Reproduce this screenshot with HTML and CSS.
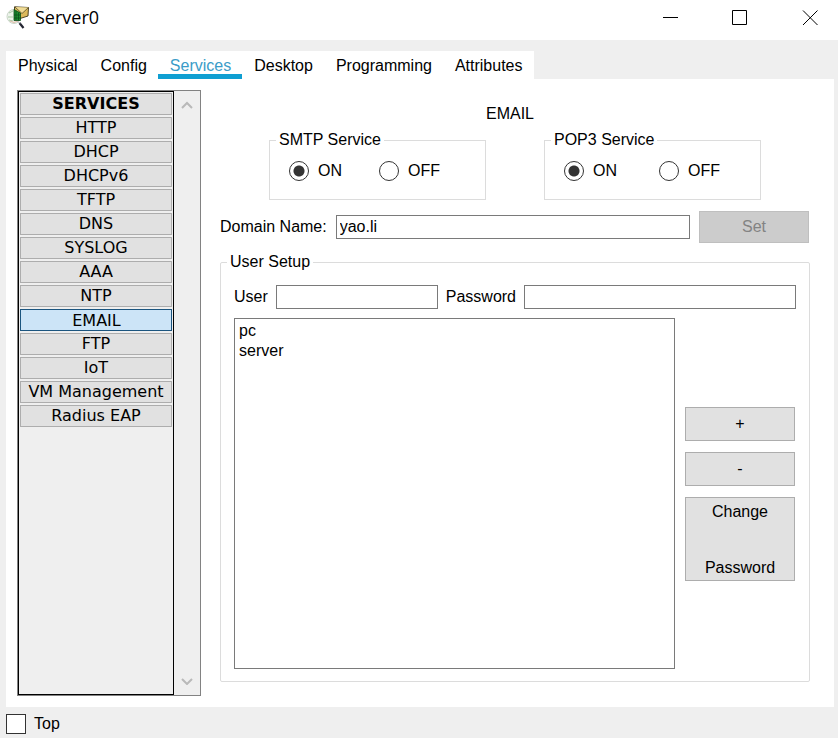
FILE: index.html
```html
<!DOCTYPE html>
<html lang="en">
<head>
<meta charset="utf-8">
<title>Server0</title>
<link rel="stylesheet" href="styles.css">
</head>
<body>
<header class="titlebar">
  <svg class="app-icon" viewBox="0 0 24 24" aria-hidden="true">
    <circle cx="8" cy="10.500" r="7" fill="#eef4ec" stroke="#cbd5c9"/>
    <path d="M3 7l4-2M2 11h5M3 14l4 1" stroke="#a9c9a4" fill="none"/>
    <path d="M4 15q4 3 8 0" stroke="#e2b9a8" fill="none"/>
    <path d="M8.500 .8L22.500 1.500L22 10L14 12.500L8.500 9z" fill="#dcb95c" stroke="#3b3317" stroke-width=".9"/>
    <path d="M9 1L16 7.500L22.500 1.500" fill="#f0dc96" stroke="#5b4d24" stroke-width=".8"/>
    <path d="M8 3.500L14.500 7V14.500L8 14.500z" fill="#1d8a30" stroke="#0a4a17" stroke-width=".8"/>
    <path d="M10 5v9M12.500 6.500v8M8 9h6M8 12h6" stroke="#07521a" stroke-width=".8" fill="none"/>
    <path d="M13.500 17L17.500 22" stroke="#222430" stroke-width="2.2"/>
    <path d="M12 15.500l2 2" stroke="#9a9aa5"/>
  </svg>
  <h1 class="title">Server0</h1>
  <div class="window-buttons">
    <button class="window-button" type="button" aria-label="Minimize"><svg viewBox="0 0 16 16"><path d="M1 7.500H16"/></svg></button>
    <button class="window-button" type="button" aria-label="Maximize"><svg viewBox="0 0 16 16"><path d="M.5 .5H14.500V14.500H.5z"/></svg></button>
    <button class="window-button" type="button" aria-label="Close"><svg viewBox="0 0 16 16"><path d="M1 .5L15.500 15M15.500 .5L1 15"/></svg></button>
  </div>
</header>

<nav class="tabs">
  <a class="tab" href="#physical">Physical</a>
  <a class="tab" href="#config">Config</a>
  <a class="tab tab-active" href="#services">Services</a>
  <a class="tab" href="#desktop">Desktop</a>
  <a class="tab" href="#programming">Programming</a>
  <a class="tab" href="#attributes">Attributes</a>
</nav>

<main class="panel">
  <aside class="sidebar">
    <div class="service-list">
      <button class="service service-heading" type="button">SERVICES</button>
      <button class="service" type="button">HTTP</button>
      <button class="service" type="button">DHCP</button>
      <button class="service" type="button">DHCPv6</button>
      <button class="service" type="button">TFTP</button>
      <button class="service" type="button">DNS</button>
      <button class="service" type="button">SYSLOG</button>
      <button class="service" type="button">AAA</button>
      <button class="service" type="button">NTP</button>
      <button class="service service-active" type="button">EMAIL</button>
      <button class="service" type="button">FTP</button>
      <button class="service" type="button">IoT</button>
      <button class="service" type="button">VM Management</button>
      <button class="service" type="button">Radius EAP</button>
    </div>
    <div class="scrollbar">
      <button class="scroll-button" type="button" aria-label="Scroll up"><svg viewBox="0 0 12 8"><path d="M1 7L6 2L11 7"/></svg></button>
      <button class="scroll-button" type="button" aria-label="Scroll down"><svg viewBox="0 0 12 8"><path d="M1 2L6 7L11 2"/></svg></button>
    </div>
  </aside>

  <form class="settings">
    <h2 class="heading">EMAIL</h2>
    <div class="protocols">
      <fieldset class="group">
        <legend>SMTP Service</legend>
        <div class="choices">
          <label class="choice"><input class="radio" type="radio" name="smtp" checked>ON</label>
          <label class="choice"><input class="radio" type="radio" name="smtp">OFF</label>
        </div>
      </fieldset>
      <fieldset class="group">
        <legend>POP3 Service</legend>
        <div class="choices choices-wide">
          <label class="choice"><input class="radio" type="radio" name="pop3" checked>ON</label>
          <label class="choice"><input class="radio" type="radio" name="pop3">OFF</label>
        </div>
      </fieldset>
    </div>

    <div class="domain">
      <label for="domain">Domain Name:</label>
      <input class="field" id="domain" type="text" value="yao.li">
      <button class="button" type="button" disabled>Set</button>
    </div>

    <fieldset class="group user-setup">
      <legend>User Setup</legend>
      <div class="setup-body">
        <div class="credentials">
          <label for="user">User</label>
          <input class="field field-user" id="user" type="text">
          <label for="password">Password</label>
          <input class="field field-password" id="password" type="password">
        </div>
        <div class="accounts">
          <select class="account-list" size="2" aria-label="Users">
            <option>pc</option>
            <option>server</option>
          </select>
          <div class="actions">
            <button class="button" type="button">+</button>
            <button class="button" type="button">-</button>
            <button class="button button-tall" type="button"><span>Change</span> <span>Password</span></button>
          </div>
        </div>
      </div>
    </fieldset>
  </form>
</main>

<footer class="footer">
  <label class="top-choice"><input class="checkbox" type="checkbox">Top</label>
</footer>
</body>
</html>
```
FILE: styles.css
```css
* {
  box-sizing: border-box;
}

body {
  margin: 0;
  min-height: 100vh;
  display: flex;
  flex-direction: column;
  background: #efefef;
  color: #000;
  font: 16px/20px "Liberation Sans", Arial, sans-serif;
}

button,
input,
select {
  margin: 0;
  font: inherit;
  color: inherit;
}

.titlebar {
  display: flex;
  align-items: center;
  height: 40px;
  padding-left: 6px;
  background: #fff;
}

.app-icon {
  width: 24px;
  height: 24px;
  margin-bottom: 4px;
}

.title {
  flex: 1;
  margin: 0 0 6px 5px;
  font: 18px/24px "Open Sans", sans-serif;
}

.window-buttons {
  display: flex;
  gap: 14px;
  margin-bottom: 5px;
}

.window-button {
  width: 56px;
  height: 35px;
  padding: 0;
  border: 0;
  background: none;
}

.window-button svg {
  display: block;
  width: 16px;
  height: 16px;
  margin: auto;
  fill: none;
  stroke: #000;
}

.tabs {
  display: flex;
  align-self: flex-start;
  margin: 11px 0 0 6px;
  background: #fff;
}

.tab {
  height: 28px;
  padding: 5px 11px 0 12px;
  color: #000;
  text-decoration: none;
}

.tab-active {
  color: #3a9cc8;
  border-bottom: 5px solid #0f9fd2;
}

.panel {
  flex: 1;
  display: flex;
  gap: 19px;
  margin: 0 4px 0 6px;
  padding: 11px 24px 11px 11px;
  background: #fff;
}

.sidebar {
  flex: none;
  display: flex;
  width: 184px;
  border: 1px solid #828282;
  background: #efefef;
}

.service-list {
  flex: 1;
  display: flex;
  flex-direction: column;
  gap: 2px;
  padding: 1px;
  border: 1px solid #000;
}

.service {
  height: 22px;
  padding: 0;
  border: 1px solid #adadad;
  background: #e1e1e1;
  font: 16px/20px "DejaVu Sans", Verdana, sans-serif;
  white-space: nowrap;
}

.service-heading {
  font-weight: bold;
}

.service-active {
  padding: 1px 0 0 1px;
  border-color: #1b557f;
  background: #cce4f7;
}

.scrollbar {
  width: 26px;
  display: flex;
  flex-direction: column;
  justify-content: space-between;
}

.scroll-button {
  height: 28px;
  padding: 0;
  border: 0;
  background: none;
}

.scroll-button svg {
  display: block;
  width: 12px;
  height: 8px;
  margin: auto;
  fill: none;
  stroke: #b9b9b9;
  stroke-width: 2;
}

.settings {
  flex: 1;
  min-width: 0;
  display: flex;
  flex-direction: column;
  padding: 14px 0;
}

.heading {
  margin: 0 10px 6px 0;
  font: inherit;
  text-align: center;
}

.group {
  min-width: 0;
  margin: 0;
  padding: 0 6px;
  border: 1px solid #dcdcdc;
}

.group legend {
  padding: 0 3px;
}

.protocols {
  display: grid;
  grid-template-columns: 1fr 1fr;
  gap: 58px;
  padding: 0 49px;
}

.choices {
  display: grid;
  grid-template-columns: 90px 90px;
  padding: 11px 13px 18px;
}

.choices-wide {
  grid-template-columns: 95px 90px;
}

.choice {
  display: flex;
  align-items: center;
  gap: 9px;
}

.radio {
  appearance: none;
  width: 20px;
  height: 20px;
  border: 1px solid #333;
  border-radius: 50%;
  background: #fff;
}

.radio:checked {
  background: radial-gradient(circle, #333 5px, #fff 6px);
}

.domain {
  display: flex;
  align-items: center;
  gap: 9px;
  margin: 11px 0 9px;
  padding-right: 1px;
}

.field {
  min-width: 0;
  height: 24px;
  padding: 0 3px;
  border: 1px solid #7a7a7a;
  border-radius: 0;
  background: #fff;
}

.domain .field {
  flex: 1;
}

.button {
  width: 110px;
  height: 34px;
  padding: 0;
  border: 1px solid #adadad;
  background: #e1e1e1;
}

.domain .button {
  height: 32px;
}

.button:disabled {
  border-color: #bfbfbf;
  background: #ccc;
  color: #838383;
}

.user-setup {
  flex: 1;
  display: flex;
  flex-direction: column;
  border-radius: 2px;
}

.setup-body {
  flex: 1;
  display: flex;
  flex-direction: column;
  gap: 9px;
  padding: 13px 7px 12px;
}

.credentials {
  display: flex;
  align-items: center;
  gap: 8px;
}

.field-user {
  flex: 7 1 0;
}

.field-password {
  flex: 12 1 0;
}

.accounts {
  flex: 1;
  display: flex;
  align-items: center;
  gap: 10px;
  padding-right: 1px;
}

.account-list {
  flex: 1;
  align-self: stretch;
  padding: 3px 1px;
  border: 1px solid #7a7a7a;
  border-radius: 0;
  background: #fff;
  overflow: auto;
}

.account-list option {
  min-height: 20px;
  padding: 0 3px;
}

.actions {
  display: flex;
  flex-direction: column;
  gap: 11px;
}

.button-tall {
  display: flex;
  flex-direction: column;
  align-items: center;
  justify-content: space-between;
  height: 84px;
  padding: 4px 0 2px;
}

.footer {
  height: 31px;
  padding: 7px 6px 0;
}

.top-choice {
  display: inline-flex;
  align-items: center;
  gap: 8px;
}

.checkbox {
  appearance: none;
  width: 20px;
  height: 20px;
  border: 1px solid #333;
  background: #fff;
}
```
